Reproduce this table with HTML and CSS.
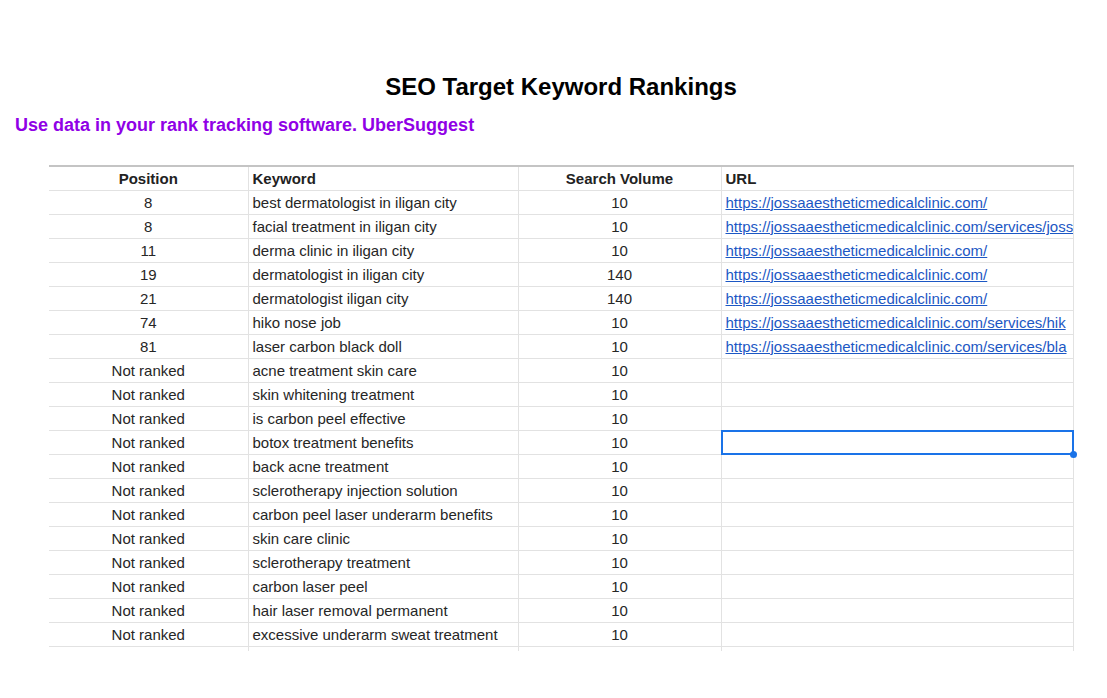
FILE: index.html
```html
<!DOCTYPE html>
<html>
<head>
<meta charset="utf-8">
<link rel="stylesheet" href="styles.css">
</head>
<body>
<h1 class="title">SEO Target Keyword Rankings</h1>
<p class="subtitle">Use data in your rank tracking software. UberSuggest</p>
<table class="sheet">
  <colgroup>
    <col class="c-pos"><col class="c-kw"><col class="c-vol"><col class="c-url">
  </colgroup>
  <thead>
    <tr><th class="center">Position</th><th>Keyword</th><th class="center">Search Volume</th><th>URL</th></tr>
  </thead>
  <tbody>
    <tr><td class="center">8</td><td>best dermatologist in iligan city</td><td class="center">10</td><td><a href="#">https://jossaaestheticmedicalclinic.com/</a></td></tr>
    <tr><td class="center">8</td><td>facial treatment in iligan city</td><td class="center">10</td><td><a href="#">https://jossaaestheticmedicalclinic.com/services/joss</a></td></tr>
    <tr><td class="center">11</td><td>derma clinic in iligan city</td><td class="center">10</td><td><a href="#">https://jossaaestheticmedicalclinic.com/</a></td></tr>
    <tr><td class="center">19</td><td>dermatologist in iligan city</td><td class="center">140</td><td><a href="#">https://jossaaestheticmedicalclinic.com/</a></td></tr>
    <tr><td class="center">21</td><td>dermatologist iligan city</td><td class="center">140</td><td><a href="#">https://jossaaestheticmedicalclinic.com/</a></td></tr>
    <tr><td class="center">74</td><td>hiko nose job</td><td class="center">10</td><td><a href="#">https://jossaaestheticmedicalclinic.com/services/hik</a></td></tr>
    <tr><td class="center">81</td><td>laser carbon black doll</td><td class="center">10</td><td><a href="#">https://jossaaestheticmedicalclinic.com/services/bla</a></td></tr>
    <tr><td class="center">Not ranked</td><td>acne treatment skin care</td><td class="center">10</td><td></td></tr>
    <tr><td class="center">Not ranked</td><td>skin whitening treatment</td><td class="center">10</td><td></td></tr>
    <tr><td class="center">Not ranked</td><td>is carbon peel effective</td><td class="center">10</td><td></td></tr>
    <tr><td class="center">Not ranked</td><td>botox treatment benefits</td><td class="center">10</td><td class="selected"></td></tr>
    <tr><td class="center">Not ranked</td><td>back acne treatment</td><td class="center">10</td><td></td></tr>
    <tr><td class="center">Not ranked</td><td>sclerotherapy injection solution</td><td class="center">10</td><td></td></tr>
    <tr><td class="center">Not ranked</td><td>carbon peel laser underarm benefits</td><td class="center">10</td><td></td></tr>
    <tr><td class="center">Not ranked</td><td>skin care clinic</td><td class="center">10</td><td></td></tr>
    <tr><td class="center">Not ranked</td><td>sclerotherapy treatment</td><td class="center">10</td><td></td></tr>
    <tr><td class="center">Not ranked</td><td>carbon laser peel</td><td class="center">10</td><td></td></tr>
    <tr><td class="center">Not ranked</td><td>hair laser removal permanent</td><td class="center">10</td><td></td></tr>
    <tr><td class="center">Not ranked</td><td>excessive underarm sweat treatment</td><td class="center">10</td><td></td></tr>
    <tr class="stub"><td></td><td></td><td></td><td></td></tr>
  </tbody>
</table>
</body>
</html>
```

FILE: styles.css
```css
html, body {
  margin: 0;
  padding: 0;
  background: #ffffff;
}
body {
  font-family: "Liberation Sans", Arial, sans-serif;
  color: #262626;
}
.title {
  margin: 73px 0 0 0;
  padding-left: 15px;
  font-size: 24px;
  line-height: 28px;
  font-weight: bold;
  text-align: center;
  color: #000000;
}
.subtitle {
  margin: 14px 0 0 15px;
  font-size: 18px;
  line-height: 21px;
  font-weight: bold;
  color: #9000e6;
}
.sheet {
  margin: 29px 0 0 49px;
  border-collapse: collapse;
  table-layout: fixed;
  width: 1024px;
  font-size: 15px;
}
.c-pos { width: 199px; }
.c-kw { width: 270px; }
.c-vol { width: 203px; }
.c-url { width: 352px; }
.sheet th, .sheet td {
  height: 23px;
  padding: 0 4px;
  line-height: 23px;
  white-space: nowrap;
  overflow: hidden;
  text-align: left;
  border-bottom: 1px solid #e2e2e2;
  border-left: 1px solid #e2e2e2;
  box-sizing: border-box;
}
.sheet th:first-child, .sheet td:first-child {
  border-left: none;
}
.sheet th:last-child, .sheet td:last-child {
  border-right: 1px solid #e2e2e2;
  text-overflow: clip;
}
.sheet thead th {
  border-top: 2px solid #c4c4c4;
  height: 24px;
  font-weight: bold;
  color: #222222;
}
.sheet tbody td {
  height: 24px;
}
.sheet .center {
  text-align: center;
}
.sheet a {
  color: #1c57c4;
  text-decoration: underline;
}
.sheet td.selected {
  position: relative;
  overflow: visible;
}
.sheet td.selected::after {
  content: "";
  position: absolute;
  left: -1px;
  top: -1px;
  right: -1px;
  bottom: -1px;
  border: 2px solid #1a73e8;
}
.sheet td.selected::before {
  content: "";
  position: absolute;
  right: -4px;
  bottom: -4px;
  width: 7px;
  height: 7px;
  border-radius: 50%;
  background: #1a73e8;
  z-index: 2;
}
.sheet tr.stub td {
  height: 4px;
  line-height: 4px;
  border-bottom: none;
}
```
